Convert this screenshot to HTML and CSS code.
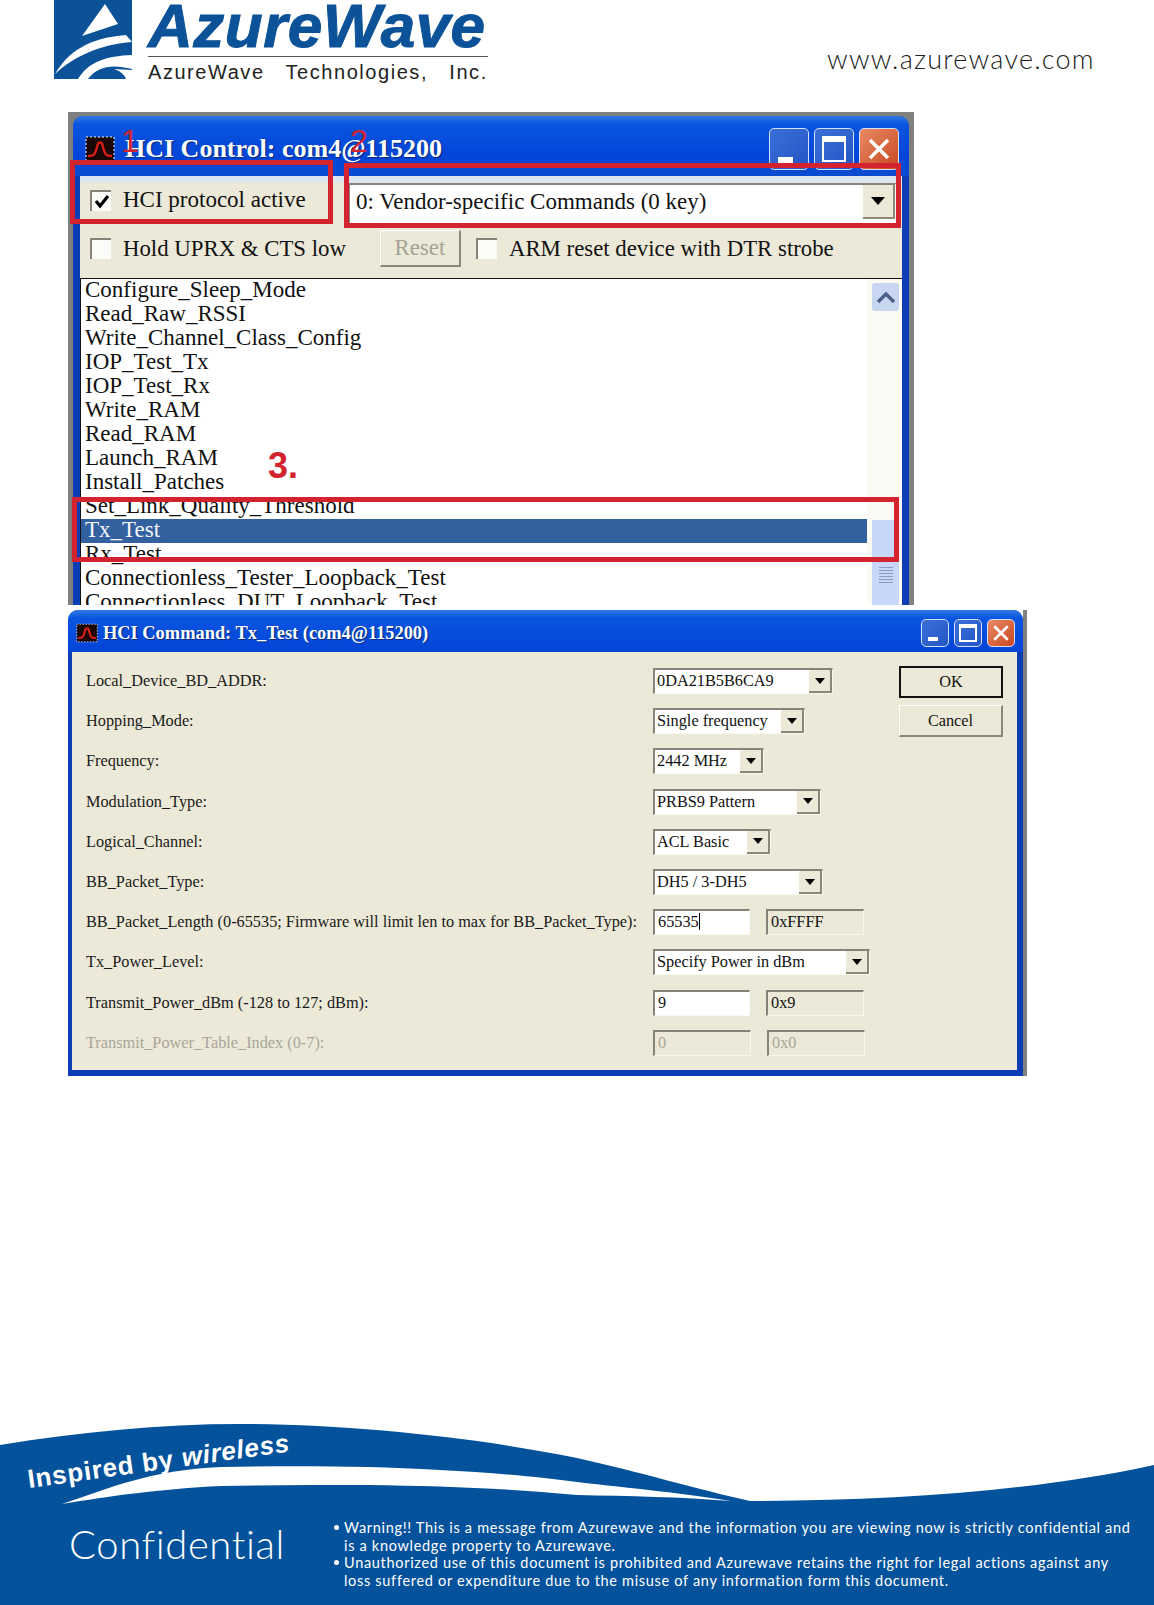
FILE: index.html
```html
<!DOCTYPE html>
<html lang="en">
<head>
  <meta charset="UTF-8">
  <title>HCI Control</title>
  <link rel="stylesheet" href="styles.css">
</head>
<body>
  <header class="page-header">
    <svg class="logo-mark" viewBox="0 0 78 79" width="78" height="79">
      <rect width="78" height="79" fill="#0b5299"/>
      <path d="M51 4 L64 24 L28 36 Z" fill="#fff"/>
      <path d="M1 74 C14 52 34 38 72 35 L78 42 C48 44 20 56 1 74 Z" fill="#fff"/>
      <path d="M24 79 C34 62 52 56 78 55 V69 C58 64 44 66 34 79 Z" fill="#fff"/>
      <path d="M60 69 C66 71 70 74 72 79 H78 V70 Z" fill="#fff"/>
    </svg>
    <div class="logo-text">
      <div class="logo-name">AzureWave</div>
      <div class="logo-sub">AzureWave   Technologies,   Inc.</div>
    </div>
    <div class="site-url">www.azurewave.com</div>
  </header>

  <!-- first screenshot: main control window -->
  <section class="window control-window">
    <div class="frame">
      <div class="titlebar">
        <svg class="app-icon" viewBox="0 0 30 26" width="30" height="26">
          <rect x="1" y="1" width="28" height="24" fill="#1a0604" stroke="#fff" stroke-dasharray="2 2"/>
          <path d="M3 20 C9 20 10 19 12 11 C13 5 17 5 18 11 C20 19 21 20 27 20" fill="none" stroke="#d81e10" stroke-width="2.4"/>
        </svg>
        <span class="title-text">HCI Control: com4@115200</span>
        <div class="caption-buttons">
          <span class="cap-btn"><i class="glyph-min"></i></span>
          <span class="cap-btn"><i class="glyph-max"></i></span>
          <span class="cap-btn cap-close">
            <svg viewBox="0 0 24 24" width="24" height="24"><path d="M3 3 L21 21 M21 3 L3 21" stroke="#fff" stroke-width="3.5"/></svg>
          </span>
        </div>
      </div>

      <div class="client">
        <div class="control-row first-row">
          <label class="check-item proto-check"><span class="checkbox checked">
            <svg viewBox="0 0 16 16" width="16" height="16"><path d="M2 8 L6 13 L14 3" fill="none" stroke="#000" stroke-width="3.2"/></svg>
          </span>HCI protocol active</label>
          <div class="combo vendor-combo"><span class="combo-value">0: Vendor-specific Commands (0 key)</span><span class="combo-arrow"></span></div>
        </div>
        <div class="control-row second-row">
          <label class="check-item"><span class="checkbox"></span>Hold UPRX &amp; CTS low</label>
          <span class="reset-btn">Reset</span>
          <label class="check-item"><span class="checkbox"></span>ARM reset device with DTR strobe</label>
        </div>

        <div class="command-list">
          <ul class="commands">
            <li>Configure_Sleep_Mode</li>
            <li>Read_Raw_RSSI</li>
            <li>Write_Channel_Class_Config</li>
            <li>IOP_Test_Tx</li>
            <li>IOP_Test_Rx</li>
            <li>Write_RAM</li>
            <li>Read_RAM</li>
            <li>Launch_RAM</li>
            <li>Install_Patches</li>
            <li>Set_Link_Quality_Threshold</li>
            <li class="selected">Tx_Test</li>
            <li>Rx_Test</li>
            <li>Connectionless_Tester_Loopback_Test</li>
            <li>Connectionless_DUT_Loopback_Test</li>
          </ul>
          <div class="scrollbar">
            <div class="scroll-up">
              <svg viewBox="0 0 20 12" width="20" height="12"><path d="M2 11 L10 3 L18 11" fill="none" stroke="#4a6088" stroke-width="3.4"/></svg>
            </div>
            <div class="scroll-thumb"><span class="grip"></span></div>
          </div>
        </div>
      </div>
    </div>

    <span class="mark mark-one"></span>
    <span class="mark mark-two"></span>
    <span class="mark mark-three"></span>
    <span class="step step-one">1</span>
    <span class="step step-two">2</span>
    <span class="step step-three">3.</span>
  </section>

  <!-- second screenshot: command dialog -->
  <section class="window dialog-window">
    <div class="frame">
      <div class="titlebar">
        <svg class="app-icon" viewBox="0 0 30 26" width="22" height="24">
          <rect x="1" y="1" width="28" height="24" fill="#1a0604" stroke="#fff" stroke-dasharray="2 2"/>
          <path d="M3 20 C9 20 10 19 12 11 C13 5 17 5 18 11 C20 19 21 20 27 20" fill="none" stroke="#d81e10" stroke-width="3"/>
        </svg>
        <span class="title-text">HCI Command: Tx_Test (com4@115200)</span>
        <div class="caption-buttons">
          <span class="cap-btn"><i class="glyph-min"></i></span>
          <span class="cap-btn"><i class="glyph-max"></i></span>
          <span class="cap-btn cap-close">
            <svg viewBox="0 0 24 24" width="18" height="18"><path d="M3 3 L21 21 M21 3 L3 21" stroke="#fff" stroke-width="3.5"/></svg>
          </span>
        </div>
      </div>

      <div class="client dialog-client">
        <div class="param-grid">
          <div class="param-label">Local_Device_BD_ADDR:</div>
          <div class="param-fields"><div class="combo w-180"><span class="combo-value">0DA21B5B6CA9</span><span class="combo-arrow"></span></div></div>

          <div class="param-label">Hopping_Mode:</div>
          <div class="param-fields"><div class="combo w-152"><span class="combo-value">Single frequency</span><span class="combo-arrow"></span></div></div>

          <div class="param-label">Frequency:</div>
          <div class="param-fields"><div class="combo w-111"><span class="combo-value">2442 MHz</span><span class="combo-arrow"></span></div></div>

          <div class="param-label">Modulation_Type:</div>
          <div class="param-fields"><div class="combo w-168"><span class="combo-value">PRBS9 Pattern</span><span class="combo-arrow"></span></div></div>

          <div class="param-label">Logical_Channel:</div>
          <div class="param-fields"><div class="combo w-118"><span class="combo-value">ACL Basic</span><span class="combo-arrow"></span></div></div>

          <div class="param-label">BB_Packet_Type:</div>
          <div class="param-fields"><div class="combo w-170"><span class="combo-value">DH5 / 3-DH5</span><span class="combo-arrow"></span></div></div>

          <div class="param-label">BB_Packet_Length (0-65535; Firmware will limit len to max for BB_Packet_Type):</div>
          <div class="param-fields"><div class="edit">65535<i class="caret"></i></div><div class="edit readonly">0xFFFF</div></div>

          <div class="param-label">Tx_Power_Level:</div>
          <div class="param-fields"><div class="combo w-217"><span class="combo-value">Specify Power in dBm</span><span class="combo-arrow"></span></div></div>

          <div class="param-label">Transmit_Power_dBm (-128 to 127; dBm):</div>
          <div class="param-fields"><div class="edit">9</div><div class="edit readonly">0x9</div></div>

          <div class="param-label disabled">Transmit_Power_Table_Index (0-7):</div>
          <div class="param-fields"><div class="edit readonly disabled">0</div><div class="edit readonly disabled">0x0</div></div>
        </div>
        <div class="dialog-buttons">
          <span class="dlg-btn default">OK</span>
          <span class="dlg-btn">Cancel</span>
        </div>
      </div>
    </div>
  </section>

  <footer class="page-footer">
    <svg class="swoosh" viewBox="0 0 1154 181" width="1154" height="181">
      <path d="M0 21 C80 8 160 0 240 0 C350 0 480 14 577 34 C640 48 700 66 750 77 C900 77 1040 66 1154 41 V181 H0 Z" fill="#04529b"/>
      <path d="M62 80 C110 64 150 46 221 43 C270 42 320 42 368 43 C440 45 520 50 577 58 C630 64 690 70 731 77 C680 73 630 72 577 71 C500 64 440 62 368 61 C320 61 270 61 221 62 C160 65 110 72 62 80 Z" fill="#fff"/>
    </svg>
    <div class="tagline">Inspired by <em>wireless</em></div>
    <div class="footer-body">
      <div class="confidential">Confidential</div>
      <ul class="notice">
        <li>Warning!! This is a message from Azurewave and the information you are viewing now is strictly confidential and is a knowledge property to Azurewave.</li>
        <li>Unauthorized use of this document is prohibited and Azurewave retains the right for legal actions against any loss suffered or expenditure due to the misuse of any information form this document.</li>
      </ul>
    </div>
  </footer>
</body>
</html>
```

FILE: styles.css
```css
* {
  box-sizing: border-box;
}

body {
  margin: 0;
  width: 1154px;
  height: 1605px;
  display: flex;
  flex-direction: column;
  background: #fff;
  overflow: hidden;
  font-family: "Liberation Serif", serif;
  color: #111;
}

/* page header */
.page-header {
  height: 112px;
  padding-left: 54px;
  display: flex;
  align-items: flex-start;
}

.logo-mark {
  flex: none;
}

.logo-text {
  margin-left: 16px;
  width: 340px;
}

.logo-name {
  font-family: "Liberation Sans", sans-serif;
  font-weight: bold;
  font-style: italic;
  font-size: 62px;
  line-height: 52px;
  letter-spacing: 0.5px;
  -webkit-text-stroke: 1px #0b5299;
  color: #0b5299;
  border-bottom: 1px solid #555;
  height: 57px;
}

.logo-sub {
  font-family: "Liberation Sans", sans-serif;
  font-size: 20px;
  line-height: 30px;
  letter-spacing: 1.55px;
  white-space: pre;
  color: #222;
}

.site-url {
  margin-left: 339px;
  margin-top: 45px;
  font-family: Lato, sans-serif;
  font-weight: 300;
  font-size: 27px;
  line-height: 28px;
  letter-spacing: 1.25px;
  color: #222;
}

/* XP style window */
.window {
  position: relative;
  margin-left: 68px;
  background: #808080;
  padding: 4px 5px 0 5px;
  overflow: hidden;
}

.control-window {
  width: 846px;
  height: 493px;
}

.dialog-window {
  width: 959px;
  height: 466px;
  margin-top: 5px;
  padding: 0 4px 0 0;
  background: linear-gradient(to left, #808080 4px, transparent 4px);
}

.frame {
  height: 100%;
  display: flex;
  flex-direction: column;
  background: #0c3db5;
  border-radius: 10px 10px 0 0;
  padding: 0 7px 0 7px;
}

.dialog-window .frame {
  padding: 0 6px 6px 4px;
}

.titlebar {
  flex: none;
  display: flex;
  align-items: center;
  margin: 0 -7px;
  padding: 6px 4px 0 12px;
  height: 60px;
  border-radius: 10px 10px 0 0;
  background: linear-gradient(#2f7ae0 0, #0a55e0 8px, #0345d8 40px, #0a4cd0 100%);
}

.dialog-window .titlebar {
  margin: 0 -6px 0 -4px;
  height: 42px;
  padding: 4px 2px 0 8px;
}

.app-icon {
  flex: none;
}

.title-text {
  margin-left: 10px;
  font-weight: bold;
  font-size: 26px;
  color: #fff;
  text-shadow: 1px 1px 1px #0a2a80;
  white-space: nowrap;
}

.dialog-window .title-text {
  margin-left: 5px;
  font-size: 18.4px;
}

.caption-buttons {
  margin-left: auto;
  display: flex;
  gap: 5px;
  padding-right: 6px;
}

.cap-btn {
  width: 40px;
  height: 42px;
  display: flex;
  align-items: center;
  justify-content: center;
  position: relative;
  border: 1px solid #d4e2f8;
  border-radius: 5px;
  background: linear-gradient(135deg, #3a6fd8, #2456c4);
}

.dialog-window .cap-btn {
  width: 28px;
  height: 28px;
}

.cap-close {
  background: linear-gradient(135deg, #e88a66, #c8481f);
}

.glyph-min {
  position: absolute;
  left: 8px;
  bottom: 6px;
  width: 15px;
  height: 6px;
  background: #fff;
}

.dialog-window .glyph-min {
  left: 6px;
  bottom: 5px;
  width: 10px;
  height: 4px;
}

.glyph-max {
  width: 24px;
  height: 26px;
  border: 2px solid #fff;
  border-top-width: 6px;
}

.dialog-window .glyph-max {
  width: 18px;
  height: 18px;
  border-top-width: 4px;
}

.client {
  flex: 1;
  min-height: 0;
  display: flex;
  flex-direction: column;
  background: #ece9d8;
}

/* control rows */
.control-row {
  display: flex;
  align-items: center;
  font-size: 23px;
  white-space: nowrap;
}

.first-row {
  height: 50px;
  padding-left: 10px;
  padding-bottom: 2px;
  background: linear-gradient(#dbe6ef 0, #dbe6ef 6px, #ece9d8 7px);
}

.second-row {
  height: 52px;
  padding-left: 10px;
  padding-bottom: 7px;
  font-size: 22.8px;
}

.check-item {
  display: flex;
  align-items: center;
  gap: 12px;
}

.proto-check {
  width: 258px;
}

.checkbox {
  width: 21px;
  height: 21px;
  display: flex;
  align-items: center;
  justify-content: center;
  background: #fbfbf8;
  border-top: 2px solid #85837a;
  border-left: 2px solid #85837a;
}

.combo {
  display: flex;
  align-items: stretch;
  height: 26px;
  background: #fff;
  border-top: 2px solid #85837a;
  border-left: 2px solid #85837a;
  border-right: 1px solid #f8f7f0;
  border-bottom: 1px solid #f8f7f0;
}

.vendor-combo {
  width: 548px;
  height: 41px;
  margin-top: 6px;
}

.vendor-combo .combo-value {
  padding-left: 6px;
  line-height: 34px;
}

.combo-value {
  flex: 1;
  padding-left: 2px;
  line-height: 21px;
  white-space: nowrap;
}

.combo-arrow {
  flex: none;
  width: 23px;
  display: flex;
  align-items: center;
  justify-content: center;
  background: #ece9d8;
  border-right: 2px solid #8a8879;
  border-bottom: 2px solid #8a8879;
}

.combo-arrow::after {
  content: "";
  border-left: 5px solid transparent;
  border-right: 5px solid transparent;
  border-top: 6px solid #000;
}

.vendor-combo .combo-arrow {
  width: 32px;
  margin-bottom: 4px;
}

.vendor-combo .combo-arrow::after {
  border-left-width: 7px;
  border-right-width: 7px;
  border-top-width: 8px;
}

.reset-btn {
  width: 81px;
  height: 37px;
  margin: 0 15px 0 34px;
  display: flex;
  align-items: center;
  justify-content: center;
  color: #a5a294;
  background: #ece9d8;
  border-right: 2px solid #8a8879;
  border-bottom: 2px solid #8a8879;
  border-top: 1px solid #fff;
  border-left: 1px solid #fff;
}

/* command list */
.command-list {
  flex: 1;
  min-height: 0;
  display: flex;
  background: #fff;
  border-top: 1px solid #111;
  border-left: 1px solid #111;
  overflow: hidden;
}

.commands {
  flex: 1;
  margin: 0;
  padding: 0;
  list-style: none;
  font-size: 23px;
  line-height: 22px;
  white-space: nowrap;
}

.commands li {
  height: 24px;
  padding-left: 4px;
}

.commands .selected {
  background: #33609f;
  color: #f4f6fb;
}

.scrollbar {
  flex: none;
  width: 35px;
  padding: 4px 3px 0 5px;
  display: flex;
  flex-direction: column;
  background: #fbfaf4;
}

.scroll-up {
  height: 28px;
  display: flex;
  align-items: center;
  justify-content: center;
  background: #c8d6f2;
  border-radius: 3px;
}

.scroll-thumb {
  margin-top: 209px;
  flex: 1;
  display: flex;
  align-items: flex-end;
  justify-content: center;
  padding-bottom: 22px;
  background: #c8d6f7;
}

.grip {
  width: 14px;
  height: 16px;
  background: repeating-linear-gradient(#8a9bbf 0, #8a9bbf 1px, transparent 1px, transparent 3px);
}

/* red annotations */
.mark {
  position: absolute;
  border: 5px solid #d2232f;
}

.mark-one {
  left: 2px;
  top: 48px;
  width: 263px;
  height: 64px;
}

.mark-two {
  left: 276px;
  top: 51px;
  width: 557px;
  height: 65px;
}

.mark-three {
  left: 4px;
  top: 385px;
  width: 827px;
  height: 65px;
}

.step {
  position: absolute;
  font-family: "Liberation Sans", sans-serif;
  color: #d2232f;
}

.step-one {
  left: 53px;
  top: 11px;
  font-size: 32px;
  line-height: 36px;
}

.step-two {
  left: 282px;
  top: 11px;
  font-size: 32px;
  line-height: 36px;
}

.step-three {
  left: 200px;
  top: 332px;
  font-weight: bold;
  font-size: 36px;
  line-height: 44px;
}

/* dialog */
.dialog-client {
  flex-direction: row;
  padding: 9px 14px 0 14px;
  font-size: 16.3px;
}

.param-grid {
  display: grid;
  grid-template-columns: 567px auto;
  grid-auto-rows: 40.2px;
  align-items: center;
  width: 813px;
}

.param-label {
  white-space: nowrap;
  color: #1a1a1a;
}

.param-label.disabled {
  color: #a9a69a;
}

.param-fields {
  display: flex;
  gap: 16px;
}

.w-180 { width: 180px; }
.w-152 { width: 152px; }
.w-111 { width: 111px; }
.w-168 { width: 168px; }
.w-118 { width: 118px; }
.w-170 { width: 170px; }
.w-217 { width: 217px; }

.edit {
  width: 97px;
  height: 26px;
  padding-left: 3px;
  line-height: 21px;
  background: #fff;
  border-top: 2px solid #85837a;
  border-left: 2px solid #85837a;
  border-right: 1px solid #f8f7f0;
  border-bottom: 1px solid #f8f7f0;
}

.edit.readonly {
  width: 98px;
  background: #ece9d8;
}

.edit.disabled {
  color: #a9a69a;
}

.caret {
  display: inline-block;
  width: 1px;
  height: 17px;
  background: #000;
  vertical-align: -3px;
}

.dialog-buttons {
  margin-left: 20px;
  padding-top: 5px;
  display: flex;
  flex-direction: column;
  gap: 7px;
}

.dlg-btn {
  width: 104px;
  height: 32px;
  display: flex;
  align-items: center;
  justify-content: center;
  border-right: 2px solid #8a8879;
  border-bottom: 2px solid #8a8879;
  border-top: 1px solid #fff;
  border-left: 1px solid #fff;
}

.dlg-btn.default {
  border: 2px solid #111;
}

/* footer */
.page-footer {
  position: relative;
  margin-top: auto;
  height: 181px;
  color: #fff;
}

.swoosh {
  display: block;
  position: absolute;
  left: 0;
  top: 0;
}

.tagline {
  position: absolute;
  left: 30px;
  top: 38px;
  font-family: "Liberation Sans", sans-serif;
  font-weight: bold;
  font-size: 26px;
  line-height: 34px;
  letter-spacing: 0.8px;
  white-space: nowrap;
  transform: rotate(-8deg);
  transform-origin: left bottom;
}

.footer-body {
  position: relative;
  height: 100%;
  padding: 95px 0 0 69px;
  display: flex;
}

.confidential {
  width: 265px;
  padding-top: 3px;
  font-family: Lato, sans-serif;
  font-weight: 300;
  font-size: 40px;
  line-height: 44px;
  letter-spacing: 0.6px;
}

.notice {
  margin: 0;
  padding: 0;
  list-style: none;
  width: 805px;
  font-family: Lato, sans-serif;
  font-size: 14.5px;
  line-height: 17.6px;
  letter-spacing: 0.69px;
}

.notice li {
  position: relative;
  padding-left: 10px;
}

.notice li::before {
  content: "";
  position: absolute;
  left: 0;
  top: 6px;
  width: 5px;
  height: 5px;
  border-radius: 50%;
  background: #fff;
}
```
